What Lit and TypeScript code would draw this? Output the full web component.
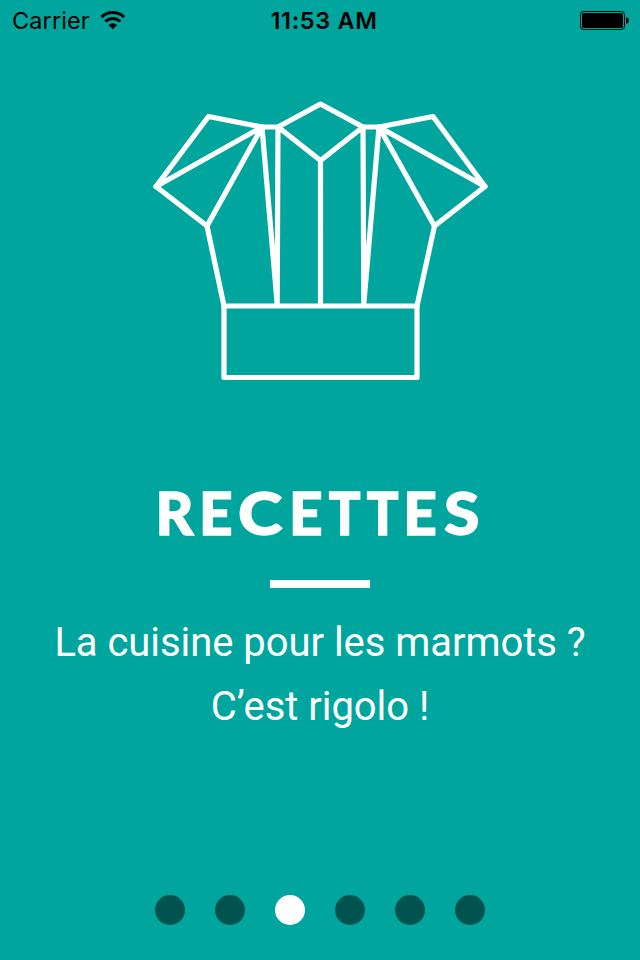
import { LitElement, html, css } from "lit";
import { customElement, property, state } from "lit/decorators.js";
import { classMap } from "lit/directives/class-map.js";

@customElement("status-bar")
class StatusBar extends LitElement {
  static styles = css`
    :host {
      display: grid;
      grid-template-columns: 1fr auto 1fr;
      align-items: center;
      height: 42px;
      padding: 0 11px 0 12px;
      box-sizing: border-box;
      color: #000;
      font: 400 23.5px/40px Inter, "Liberation Sans", sans-serif;
    }
    .left {
      display: flex;
      align-items: center;
      gap: 10px;
    }
    .carrier {
      letter-spacing: 0.1px;
    }
    .wifi {
      margin-top: -2px;
    }
    .time {
      font-weight: 600;
      letter-spacing: 0.65px;
      padding-left: 7px;
    }
    .battery {
      justify-self: end;
    }
    svg {
      display: block;
    }
  `;
  render() {
    return html`
      <div class="left">
        <span class="carrier">Carrier</span>
        <svg class="wifi" width="26" height="20" viewBox="0 0 26 20">
          <g fill="none" stroke="#000" stroke-width="3">
            <path d="M1.500 7.100a16.300 16.300 0 0 1 22.600 0" />
            <path d="M5.300 11.500a10.700 10.700 0 0 1 15 0" />
          </g>
          <path d="M12.800 19.200L8.500 14.900a6.100 6.100 0 0 1 8.600 0z" />
        </svg>
      </div>
      <div class="time">11:53 AM</div>
      <svg class="battery" width="49" height="20" viewBox="0 0 49 20">
        <rect x="0.5" y="0.5" width="44" height="18" rx="3" fill="none" stroke="#000" />
        <rect x="2" y="2" width="41" height="15" rx="1.6" />
        <path d="M46 6.500h1.200q1.800 1 1.800 3t-1.800 3H46z" />
      </svg>
    `;
  }
}

@customElement("page-dots")
class PageDots extends LitElement {
  static styles = css`
    :host {
      display: flex;
      justify-content: center;
      gap: 30px;
    }
    .dot {
      width: 30px;
      height: 30px;
      border-radius: 50%;
      background: #00534f;
    }
    .active {
      background: #fff;
    }
  `;
  @property({ type: Number }) count = 0;
  @property({ type: Number }) current = 0;
  render() {
    return Array.from(
      { length: this.count },
      (_, i) => html`<span class=${classMap({ dot: true, active: i === this.current })}></span>`
    );
  }
}

@customElement("app-root")
class AppRoot extends LitElement {
  static styles = css`
    :host {
      display: flex;
      flex-direction: column;
      width: 640px;
      height: 960px;
      overflow: hidden;
      background: #00a69e;
      color: #fff;
    }
    .slide {
      flex: 1;
      display: flex;
      flex-direction: column;
      align-items: center;
      text-align: center;
    }
    .hat {
      display: block;
      margin-top: 48px;
    }
    h1 {
      margin: 86px 0 0;
      font: 900 58.5px/72px Lato, sans-serif;
      letter-spacing: 5.4px;
      text-indent: -2.5px;
      white-space: nowrap;
      -webkit-text-stroke: 1.3px #fff;
    }
    h1 span {
      display: inline-block;
      text-indent: 0;
    }
    .wide {
      transform: scaleX(1.15);
      transform-origin: 0 50%;
      margin-right: 7px;
    }
    .bar {
      transform: scaleX(0.9);
      transform-origin: 45% 50%;
      margin: 0 -2px 0 -1px;
    }
    .end {
      transform: scaleX(1.1);
      transform-origin: 0 50%;
      margin-left: 2px;
    }
    .rule {
      width: 100px;
      height: 8px;
      margin-top: 32px;
      background: #fff;
    }
    p {
      margin: 23px 0 0;
      font: 400 40px/64px Roboto, sans-serif;
      letter-spacing: -0.05px;
      white-space: nowrap;
    }
    page-dots {
      padding-bottom: 35px;
    }
  `;
  @state() private page = 2;
  render() {
    return html`
      <status-bar></status-bar>
      <main class="slide">
        <svg class="hat" width="340" height="300" viewBox="150 90 340 300"
          fill="none" stroke="#fff" stroke-width="5.2" stroke-linejoin="round" stroke-linecap="round">
          <path d="M224 306H417V377.500H224Z" />
          <path d="M224 306L207 226L156 186.500L208.500 116.500L262 127H278L320.500 104L363 127H379L433 116.500L485 186.500L434.500 226L417 306" />
          <path d="M156 186.500L262 127L207 226M262 127L277.200 304L278 127L320.500 160.500L363 127L363.800 304L379 127L434.500 226M379 127L485 186.500M320.500 160.500V304" />
        </svg>
        <h1>RE<span class="wide">C</span>E<span class="bar">T</span><span class="bar">T</span>E<span class="end">S</span></h1>
        <div class="rule"></div>
        <p>La cuisine pour les marmots ?<br />C’est rigolo !</p>
      </main>
      <page-dots .count=${6} .current=${this.page}></page-dots>
    `;
  }
}
